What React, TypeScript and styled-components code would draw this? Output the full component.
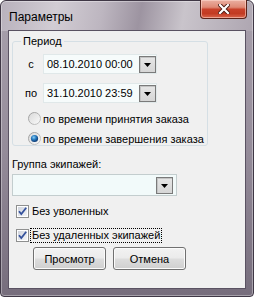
import React from 'react';
import styled, { createGlobalStyle } from 'styled-components';

const GlobalStyle = createGlobalStyle`
  html, body {
    margin: 0;
    padding: 0;
    background: #ffffff;
  }
  body {
    font-family: "Liberation Sans", Arial, sans-serif;
    font-size: 11px;
    color: #000;
  }
`;

const Window = styled.div`
  box-sizing: border-box;
  width: 254px;
  height: 297px;
  border: 1px solid #3f3745;
  border-radius: 6px 6px 4px 4px;
  padding: 0 7px 7px;
  display: flex;
  flex-direction: column;
  background:
    linear-gradient(100deg, #b8b1bc 0%, #d2cdd4 22%, #bdb6c0 40%, #9d94a1 55%, #c9c4cb 72%, #aea6b1 100%) top / 100% 30px no-repeat,
    linear-gradient(180deg, #a9a1ad 0%, #958c9a 50%, #766d7c 100%);
  box-shadow: inset 0 0 0 1px rgba(255, 255, 255, 0.35);
`;

const TitleBar = styled.div`
  height: 29px;
  display: flex;
  align-items: flex-start;
`;

const Title = styled.div`
  font-size: 12px;
  padding: 9px 0 0 1px;
  color: #000;
`;

const CloseButton = styled.div`
  box-sizing: border-box;
  width: 47px;
  height: 19px;
  margin: -1px -1px 0 auto;
  border: 1px solid #5b2319;
  border-top: none;
  border-radius: 0 0 4px 4px;
  background: linear-gradient(180deg, #eab0a2 0%, #df8a76 40%, #c8412a 52%, #c23b22 75%, #d9664c 100%);
  box-shadow: inset 0 0 0 1px rgba(255, 220, 210, 0.55);
  display: flex;
  align-items: center;
  justify-content: center;
`;

const Client = styled.div`
  flex: 1;
  background: #f0f0f0;
  border: 1px solid #5a5262;
  padding: 4px 0 0 3px;
  display: flex;
  flex-direction: column;
  align-items: flex-start;
`;

const Group = styled.fieldset`
  box-sizing: border-box;
  width: 196px;
  margin: 0;
  padding: 0 0 0 6px;
  border: 1px solid #d5dfe5;
  border-radius: 3px;
`;

const Legend = styled.legend`
  padding: 0 2px;
  margin-left: 2px;
  line-height: 13px;
  font-size: 11px;
`;

const DateRow = styled.div<{ $top: number }>`
  display: grid;
  grid-template-columns: 24px auto;
  align-items: center;
  margin-top: ${(p) => p.$top}px;
`;

const RowLabel = styled.span`
  text-align: center;
`;

const DateBox = styled.div`
  box-sizing: border-box;
  width: 114px;
  height: 20px;
  border: 1px solid #e0e8e9;
  background: #f6fbfb;
  display: flex;
  align-items: center;
  padding-left: 3px;
`;

const BoxText = styled.span`
  flex: 1;
`;

const DropButton = styled.div`
  box-sizing: border-box;
  width: 17px;
  height: 17px;
  border: 1px solid #7a7a7a;
  background: linear-gradient(180deg, #e6e6e6 0%, #d6d6d6 100%);
  box-shadow: inset 1px 1px 0 #c4c4c4;
  display: flex;
  align-items: center;
  justify-content: center;
  padding-top: 2px;
`;

const RadioRow = styled.label<{ $top: number }>`
  display: flex;
  align-items: center;
  gap: 2px;
  height: 13px;
  padding-left: 9px;
  margin-top: ${(p) => p.$top}px;
`;

const FieldLabel = styled.div`
  line-height: 13px;
  margin-top: 12px;
`;

const Combo = styled.div`
  box-sizing: border-box;
  width: 165px;
  height: 22px;
  margin-top: 3px;
  border: 1px solid #c3cdce;
  background: #f2fafa;
  display: flex;
  align-items: center;
  justify-content: flex-end;
  padding-right: 3px;
`;

const CheckRow = styled.label<{ $top: number }>`
  display: flex;
  align-items: center;
  gap: 2px;
  height: 15px;
  padding-left: 4px;
  margin-top: ${(p) => p.$top}px;
`;

const CheckText = styled.span<{ $focused?: boolean }>`
  padding: 0 1px;
  line-height: 13px;
  outline: ${(p) => (p.$focused ? '1px dotted #000' : 'none')};
  outline-offset: 0;
`;

const Buttons = styled.div`
  display: flex;
  gap: 7px;
  margin: 4px 0 0 21px;
`;

const Button = styled.button`
  box-sizing: border-box;
  width: 73px;
  height: 23px;
  padding: 0;
  border: 1px solid #707070;
  border-radius: 3px;
  background: linear-gradient(180deg, #f2f2f2 0%, #ebebeb 48%, #dddddd 52%, #cfcfcf 100%);
  box-shadow: inset 0 0 0 1px #fbfbfb;
  font-family: "Liberation Sans", Arial, sans-serif;
  font-size: 11px;
  color: #000;
`;

const Arrow = () => (
  <svg width="7" height="4" viewBox="0 0 7 4">
    <path d="M0 0 H7 L3.5 4 Z" fill="#000" />
  </svg>
);

const Radio = ({ checked }: { checked?: boolean }) => (
  <svg width="13" height="13" viewBox="0 0 13 13">
    <defs>
      <linearGradient id="rb" x1="0" y1="0" x2="1" y2="1">
        <stop offset="0" stopColor="#9a9a9a" />
        <stop offset="1" stopColor="#c8c8c8" />
      </linearGradient>
      <linearGradient id="rf" x1="0" y1="0" x2="1" y2="1">
        <stop offset="0" stopColor="#d8d8d8" />
        <stop offset="1" stopColor="#fbfbfb" />
      </linearGradient>
      <radialGradient id="rd" cx="0.4" cy="0.35" r="0.6">
        <stop offset="0" stopColor="#8fd0f5" />
        <stop offset="0.5" stopColor="#2a7fc4" />
        <stop offset="1" stopColor="#0f3f7a" />
      </radialGradient>
    </defs>
    <circle cx="6.5" cy="6.5" r="6" fill="url(#rf)" stroke="url(#rb)" strokeWidth="1" />
    {checked && <circle cx="6.5" cy="6.5" r="3.6" fill="url(#rd)" />}
  </svg>
);

const Check = () => (
  <svg width="13" height="13" viewBox="0 0 13 13">
    <defs>
      <linearGradient id="cf" x1="0" y1="0" x2="1" y2="1">
        <stop offset="0" stopColor="#cfd3dc" />
        <stop offset="1" stopColor="#f3f4f7" />
      </linearGradient>
    </defs>
    <rect x="0.5" y="0.5" width="12" height="12" fill="#fff" stroke="#8e8f8f" />
    <rect x="2" y="2" width="9" height="9" fill="url(#cf)" />
    <path d="M3 6.2 L5.3 9 L10.2 2.8" fill="none" stroke="#34519c" strokeWidth="1.8" />
  </svg>
);

export default function App() {
  return (
    <>
      <GlobalStyle />
      <Window>
        <TitleBar>
          <Title>Параметры</Title>
          <CloseButton>
            <svg width="12" height="10" viewBox="0 0 12 10">
              <path d="M2 1 L10 9 M10 1 L2 9" stroke="#4a1a12" strokeWidth="4" strokeLinecap="square" />
              <path d="M2 1 L10 9 M10 1 L2 9" stroke="#ffffff" strokeWidth="2.2" strokeLinecap="square" />
            </svg>
          </CloseButton>
        </TitleBar>
        <Client>
          <Group>
            <Legend>Период</Legend>
            <DateRow $top={6}>
              <RowLabel>с</RowLabel>
              <DateBox>
                <BoxText>08.10.2010 00:00</BoxText>
                <DropButton>
                  <Arrow />
                </DropButton>
              </DateBox>
            </DateRow>
            <DateRow $top={9}>
              <RowLabel>по</RowLabel>
              <DateBox>
                <BoxText>31.10.2010 23:59</BoxText>
                <DropButton>
                  <Arrow />
                </DropButton>
              </DateBox>
            </DateRow>
            <RadioRow $top={9}>
              <Radio />
              <span>по времени принятия заказа</span>
            </RadioRow>
            <RadioRow $top={7}>
              <Radio checked />
              <span>по времени завершения заказа</span>
            </RadioRow>
          </Group>
          <FieldLabel>Группа экипажей:</FieldLabel>
          <Combo>
            <DropButton>
              <Arrow />
            </DropButton>
          </Combo>
          <CheckRow $top={8}>
            <Check />
            <CheckText>Без уволенных</CheckText>
          </CheckRow>
          <CheckRow $top={9}>
            <Check />
            <CheckText $focused>Без удаленных экипажей</CheckText>
          </CheckRow>
          <Buttons>
            <Button>Просмотр</Button>
            <Button>Отмена</Button>
          </Buttons>
        </Client>
      </Window>
    </>
  );
}
